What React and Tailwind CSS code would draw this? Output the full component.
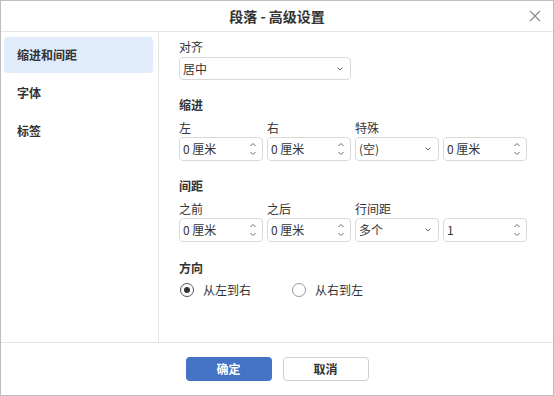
import React from 'react';

const font = { fontFamily: '"Noto Sans CJK SC", "Noto Sans", sans-serif' };

const Spin = () => (
  <svg width="8" height="16" viewBox="0 0 8 16" className="text-[#666]">
    <path d="M1.5 5 L4 2.5 L6.5 5" fill="none" stroke="currentColor" strokeWidth="1" />
    <path d="M1.5 11 L4 13.5 L6.5 11" fill="none" stroke="currentColor" strokeWidth="1" />
  </svg>
);

const Caret = () => (
  <svg width="8" height="6" viewBox="0 0 8 6" className="text-[#666]">
    <path d="M1.5 1.5 L4 4 L6.5 1.5" fill="none" stroke="currentColor" strokeWidth="1" />
  </svg>
);

const NumInput = ({ value }) => (
  <div className="h-[24px] w-[84px] rounded-[4px] border border-[#d9d9d9] bg-white flex items-center justify-between pl-[3px] pr-[5px]">
    <span className="text-[12px] text-[#333]">{value}</span>
    <Spin />
  </div>
);

const Select = ({ value, w = 'w-[84px]', h = 'h-[24px]' }) => (
  <div className={`${h} ${w} rounded-[4px] border border-[#d9d9d9] bg-white flex items-center justify-between pl-[3px] pr-[6px]`}>
    <span className="text-[12px] text-[#333]">{value}</span>
    <Caret />
  </div>
);

const Label = ({ children }) => (
  <div className="h-[16px] leading-[16px] text-[12px] text-[#333]">{children}</div>
);

const Heading = ({ children, className = '' }) => (
  <div className={`h-[16px] leading-[16px] text-[12px] font-bold text-[#333] ${className}`}>{children}</div>
);

const Radio = ({ checked, label }) => (
  <div className="flex items-center gap-[9px]">
    <div className={`w-[14px] h-[14px] rounded-full border flex items-center justify-center ${checked ? 'border-[#555]' : 'border-[#999]'}`}>
      {checked && <div className="w-[6px] h-[6px] rounded-full bg-[#333]" />}
    </div>
    <span className="text-[12px] text-[#333]">{label}</span>
  </div>
);

const navItems = ['缩进和间距', '字体', '标签'];

export default function App() {
  return (
    <div style={font} className="w-[554px] h-[396px] border border-[#bdbdbd] bg-white flex flex-col">
      {/* title bar */}
      <div className="h-[31px] shrink-0 border-b border-[#e5e5e5] relative flex items-center justify-center">
        <span className="text-[14px] font-bold text-[#333]">段落 - 高级设置</span>
        <svg width="12" height="12" viewBox="0 0 12 12" className="absolute right-[12px] top-[9px] text-[#888]">
          <path d="M1 1 L11 11 M11 1 L1 11" stroke="currentColor" strokeWidth="1.1" />
        </svg>
      </div>

      <div className="flex flex-1 min-h-0">
        {/* side nav */}
        <div className="w-[158px] shrink-0 border-r border-[#e5e5e5] pt-[5px] pl-[3px] pr-[5px] flex flex-col gap-[2px]">
          {navItems.map((item, i) => (
            <div
              key={item}
              className={`h-[36px] rounded-[4px] flex items-center pl-[13px] text-[12px] font-bold text-[#333] ${i === 0 ? 'bg-[#e0ecfa]' : ''}`}
            >
              {item}
            </div>
          ))}
        </div>

        {/* content */}
        <div className="flex-1 pl-[20px] pt-[7px] flex flex-col">
          <Label>对齐</Label>
          <div className="mt-[2px]">
            <Select value="居中" w="w-[172px]" h="h-[23px]" />
          </div>

          <Heading className="mt-[17px]">缩进</Heading>
          <div className="mt-[7px] grid grid-cols-[84px_84px_84px_84px] gap-x-[4px] gap-y-[1px]">
            <Label>左</Label>
            <Label>右</Label>
            <Label>特殊</Label>
            <div />
            <NumInput value="0 厘米" />
            <NumInput value="0 厘米" />
            <Select value="(空)" />
            <NumInput value="0 厘米" />
          </div>

          <Heading className="mt-[17px]">间距</Heading>
          <div className="mt-[7px] grid grid-cols-[84px_84px_84px_84px] gap-x-[4px] gap-y-[1px]">
            <Label>之前</Label>
            <Label>之后</Label>
            <Label>行间距</Label>
            <div />
            <NumInput value="0 厘米" />
            <NumInput value="0 厘米" />
            <Select value="多个" />
            <NumInput value="1" />
          </div>

          <Heading className="mt-[18px]">方向</Heading>
          <div className="mt-[5px] flex items-center gap-[41px] pl-[1px]">
            <Radio checked label="从左到右" />
            <Radio label="从右到左" />
          </div>
        </div>
      </div>

      {/* footer */}
      <div className="h-[53px] shrink-0 border-t border-[#e5e5e5] flex items-center justify-center gap-[11px]">
        <button className="w-[86px] h-[24px] rounded-[4px] bg-[#4472c4] text-white text-[12px] font-bold">确定</button>
        <button className="w-[86px] h-[24px] rounded-[4px] border border-[#d0d0d0] bg-white text-[#333] text-[12px] font-bold">取消</button>
      </div>
    </div>
  );
}
